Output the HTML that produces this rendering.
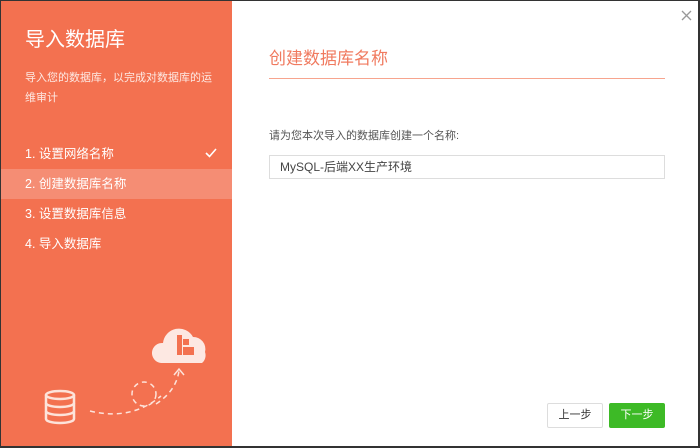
<!DOCTYPE html>
<html><head><meta charset="utf-8"><style>
*{margin:0;padding:0;box-sizing:border-box}
html,body{width:700px;height:448px;overflow:hidden;background:#333}
body{font-family:"Liberation Sans","Noto Sans CJK SC",sans-serif;position:relative}
#frame{position:absolute;left:1px;top:1px;width:697px;height:445px;background:#fff}
#left{position:absolute;left:0;top:0;width:231px;height:445px;background:#F37150;color:#fff}
.t{position:absolute;left:24px;top:25px;font-size:20px;line-height:28px}
.s{position:absolute;left:24px;top:67px;font-size:11px;line-height:20px;width:190px;color:#fde9e3}
.step{position:absolute;left:0;width:231px;height:30px;line-height:30px;padding-left:24px;font-size:12.5px}
.hl{background:#F58D74}
#right h2{position:absolute;left:268px;top:43px;font-weight:normal;font-size:17px;color:#F07A5F}
.line{position:absolute;left:268px;top:77px;width:396px;height:1px;background:#F7A48E}
.lab{position:absolute;left:268px;top:126px;font-size:11px;color:#555}
.inp{position:absolute;left:268px;top:154px;width:396px;height:24px;border:1px solid #ddd;font-size:12px;line-height:22px;padding-left:10px;color:#444}
.btn{position:absolute;top:402px;height:25px;width:56px;font-size:11px;text-align:center;line-height:23px;border-radius:2px}
</style></head><body>
<div id="frame">
<div id="left">
<div class="t">导入数据库</div>
<div class="s">导入您的数据库，以完成对数据库的运维审计</div>
<div class="step" style="top:138px">1. 设置网络名称<svg style="position:absolute;left:204px;top:9px" width="12" height="10"><path d="M1 5 L4.5 8.5 L11 1" fill="none" stroke="#fff" stroke-width="1.6"/></svg></div>
<div class="step hl" style="top:168px">2. 创建数据库名称</div>
<div class="step" style="top:198px">3. 设置数据库信息</div>
<div class="step" style="top:228px">4. 导入数据库</div>
<svg style="position:absolute;left:0;top:300px" width="231" height="145">
<g fill="none" stroke="#fde3da" stroke-width="1.5">
<path d="M89 110 Q130 120 160 95" stroke-dasharray="5 4"/>
<circle cx="143" cy="93" r="12" stroke-dasharray="5 4"/>
<path d="M155 103 Q175 90 178 70" stroke-dasharray="5 4"/>
<path d="M173 74 L178 68 L183 74"/>
</g>
<path d="M160 62 a10 10 0 0 1 2 -20 a16 16 0 0 1 30 -6 a12 12 0 0 1 12 15 a10 10 0 0 1 -3 11 z" fill="#fde8e2"/>
<g fill="#F37150"><rect x="176" y="34" width="5" height="20"/><rect x="182" y="38" width="6" height="6"/><rect x="182" y="46" width="11" height="8"/></g>
<g fill="none" stroke="#fde3da" stroke-width="2.5">
<ellipse cx="59" cy="94" rx="14" ry="4"/>
<path d="M45 94 v24 a14 4 0 0 0 28 0 v-24"/>
<path d="M45 102 a14 4 0 0 0 28 0 M45 110 a14 4 0 0 0 28 0"/>
</g>
</svg>
</div>
<div id="right">
<svg style="position:absolute;left:680px;top:9px" width="11" height="11"><path d="M1 1 L10 10 M10 1 L1 10" stroke="#999" stroke-width="1.3"/></svg>
<h2>创建数据库名称</h2>
<div class="line"></div>
<div class="lab">请为您本次导入的数据库创建一个名称:</div>
<div class="inp">MySQL-后端XX生产环境</div>
<div class="btn" style="left:546px;border:1px solid #ddd;color:#333;background:#fff">上一步</div>
<div class="btn" style="left:608px;background:#3DBA26;color:#fff;border:1px solid #3DBA26">下一步</div>
</div>
</div>
</body></html>
